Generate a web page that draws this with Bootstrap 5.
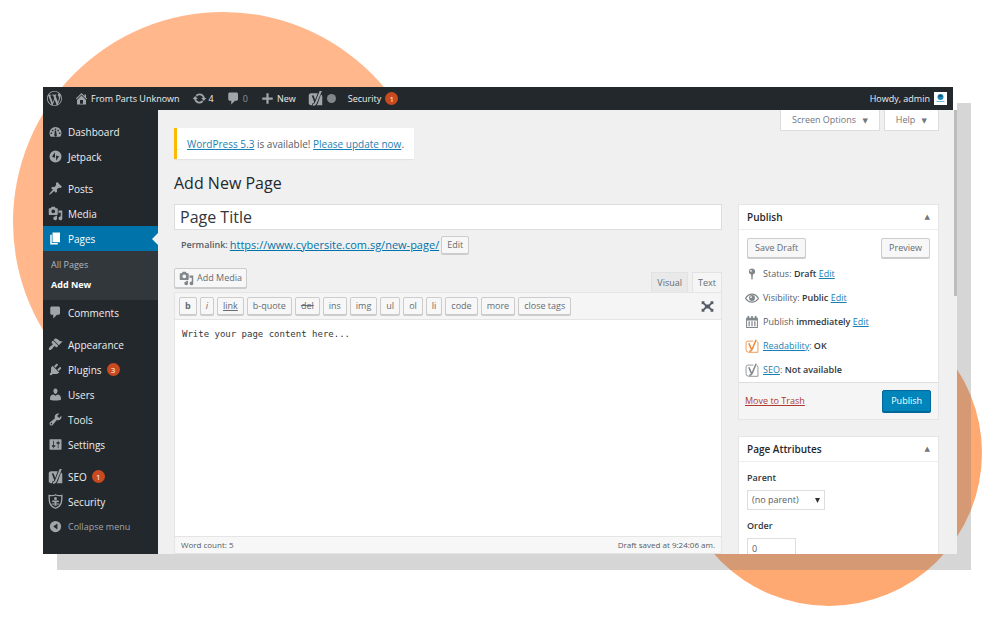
<!DOCTYPE html>
<html lang="en">
<head>
<meta charset="utf-8">
<meta name="viewport" content="width=device-width, initial-scale=1">
<title>Add New Page</title>
<link href="https://cdn.jsdelivr.net/npm/bootstrap@5.3.0/dist/css/bootstrap.min.css" rel="stylesheet">
<style>
body{font:9px/16px "Open Sans","Noto Sans",sans-serif;color:#555d66;background:#fff}
a{color:#1c7fb3}
.stage{min-height:100vh;padding:87px 43px 88px;isolation:isolate;overflow:hidden}
.disc{position:absolute;border-radius:50%;z-index:-1}
.disc-a{width:420px;height:420px;left:13px;top:12px;background:#ffb78b}
.disc-b{width:306px;height:306px;right:18px;bottom:36px;background:#ffa972}
.screen{height:calc(100vh - 175px);box-shadow:14px 16px 0 rgba(120,122,120,.31)}
.ic{width:15px;height:15px;fill:currentColor;flex:none}
.topbar{height:23px;background:#23282d;color:#eee;padding:0 6px 0 4px;margin-right:4px}
.topbar a,.side a{color:#eee;text-decoration:none}
.topbar .ic{color:#a0a5aa}
.topbar .item{gap:2px;margin-right:12px}
.dot{width:9px;height:9px;border-radius:50%;background:#82878c}
.count{min-width:13px;height:13px;line-height:13px;border-radius:50%;background:#ca4a1f;color:#fff;font-size:8px;text-align:center}
.side{width:115px;background:#23282d;padding-top:9px}
.side a{height:25px;padding:0 5px;gap:5px;font-size:10px}
.side .ic{color:#a0a5aa}
.side .gap{margin-top:7px}
.side .now{background:#0073aa;color:#fff;position:relative}
.side .now .ic{color:#fff}
.side .now::after{content:"";position:absolute;right:0;top:7px;border:6px solid transparent;border-right-color:#f0f0f0;border-left:0}
.side .sub{background:#32373c;padding:4px 0 5px}
.side .sub a{height:20px;padding:0 8px;color:#b4b9be;font-size:9px}
.side .sub .cur{color:#fff;font-weight:700}
.side .fold{color:#a0a5aa;font-size:9px}
.work{background:#f0f0f0;padding:0 18px 0 16px;position:relative}
.thumb{position:absolute;right:0;top:0;width:3px;height:186px;background:#bcbdbd}
.screen-tab{height:21px;background:#fff;border:1px solid #ddd;border-top:0;color:#72777c;padding:0 11px;font-size:9px}
.update{margin-top:18px;height:31px;background:#fff;border-left:3px solid #ffb900;padding:0 10px;font-size:10px;box-shadow:0 1px 1px rgba(0,0,0,.05)}
h1{font-size:16px;line-height:24px;font-weight:400;color:#23282d;margin:12px 0 9px}
.title-box{height:26px;border:1px solid #ddd;border-radius:0;padding:0 5px;font-size:16px;line-height:24px;color:#32373c}
.wbtn{background:#f7f7f7;border:1px solid #ccc;border-radius:2px;color:#666c72;box-shadow:0 1px 0 #ccc;font-size:9px;line-height:16px;padding:0 5px}
.wbtn.tall{line-height:18px;padding:0 7px}
.wbtn.add{padding:0 4px;gap:3px}
.wbtn .ic{color:#82878c}
.perma{padding:5px 7px;height:30px;gap:2px}
.perma a{font-size:11px;color:#0073aa}
.perma strong{font-weight:600}
.ed-tab{border:1px solid #e2e2e2;border-bottom:0;background:#e9e9e9;color:#666c72;height:20px;padding:0 5px}
.ed-tab.on{background:#f5f5f5}
.quick{background:#f5f5f5;border:1px solid #e5e5e5;height:28px;padding:0 7px 0 4px;gap:3px}
.expand{color:#555d66}
.expand .ic{width:13px;height:13px}
.write{border:1px solid #e5e5e5;border-top:0;resize:none;padding:6px 7px;font:9px/16px "DejaVu Sans Mono",monospace;color:#32373c;background:#fff;outline:0}
.foot{background:#f7f7f7;border:1px solid #e5e5e5;border-top:0;height:17px;padding:0 6px;font-size:8px}
.rail{width:201px;padding-top:94px}
.panel{background:#fff;border:1px solid #e5e5e5}
.panel h2{margin:0;height:25px;padding:0 8px;font-size:10px;font-weight:600;line-height:16px;color:#23282d;border-bottom:1px solid #eee}
.tri{font:7px/16px "DejaVu Sans",sans-serif;color:#72777c}
.facts{padding:4px 6px 0}
.facts li{height:24px;gap:4px}
.facts .ic{width:14px;height:14px;color:#82878c}
.facts .warm{color:#ee8a3c}
.facts b,.panel label{font-weight:600;color:#32373c}
.major{background:#f5f5f5;border-top:1px solid #ddd;padding:0 7px 0 6px;height:37px}
.trash{color:#b03a30}
.go{background:#0085ba;border:1px solid #006799;border-radius:2px;color:#fff;line-height:20px;padding:0 8px;box-shadow:0 1px 0 #006799}
.attrs{padding:8px}
.attrs select,.attrs input{border:1px solid #ddd;border-radius:0;font-size:9px;line-height:16px;height:20px;padding:0 4px;color:#555d66;box-shadow:none}
.attrs select{width:78px;background-position:right 4px center;background-size:5px;--bs-form-select-bg-img:url("data:image/svg+xml,%3Csvg xmlns='http://www.w3.org/2000/svg' viewBox='0 0 6 6'%3E%3Cpath d='M0 0h6L3 6z' fill='%23333'/%3E%3C/svg%3E")}
.attrs input{width:49px}
</style>
</head>
<body>
<svg class="d-none" xmlns="http://www.w3.org/2000/svg">
<symbol id="wp" viewBox="0 0 20 20"><path d="M20 10c0-5.51-4.49-10-10-10C4.48 0 0 4.49 0 10c0 5.52 4.48 10 10 10 5.51 0 10-4.48 10-10zM7.78 15.37L4.37 6.22c.55-.02 1.17-.08 1.17-.08.5-.06.44-1.13-.06-1.11 0 0-1.45.11-2.37.11-.18 0-.37 0-.58-.01C4.12 2.69 6.87 1.11 10 1.11c2.33 0 4.45.87 6.05 2.34-.68-.11-1.65.39-1.65 1.58 0 .74.45 1.36.9 2.1.35.61.55 1.36.55 2.46 0 1.49-1.4 5-1.4 5l-3.03-8.37c.54-.02.82-.17.82-.17.5-.05.44-1.25-.06-1.22 0 0-1.44.12-2.38.12-.87 0-2.33-.12-2.33-.12-.5-.03-.56 1.2-.06 1.22l.92.08 1.26 3.41zM17.41 10c.24-.64.74-1.87.43-4.25.7 1.29 1.05 2.71 1.05 4.25 0 3.29-1.73 6.24-4.4 7.78.97-2.59 1.94-5.2 2.92-7.78zM6.1 18.09C3.12 16.65 1.11 13.53 1.11 10c0-1.3.23-2.48.72-3.59C3.25 10.3 4.67 14.2 6.1 18.09zm4.03-6.63l2.58 6.98c-.86.29-1.76.45-2.71.45-.79 0-1.57-.11-2.29-.33.81-2.38 1.62-4.74 2.42-7.1z"/></symbol>
<symbol id="home" viewBox="0 0 20 20"><path fill-rule="evenodd" d="M16 8.5l1.53 1.53-1.06 1.06L10 4.6l-6.47 6.49-1.06-1.06L10 2.5l4 4v-2h2v4zm-6-2.46l6 5.99V18H4v-5.97zM12 17v-5H8v5h4z"/></symbol>
<symbol id="update" viewBox="0 0 20 20"><path d="M10.2 3.28c3.53 0 6.43 2.61 6.92 6h2.08l-3.5 4-3.5-4h2.32c-.45-1.97-2.21-3.45-4.32-3.45-1.45 0-2.73.71-3.54 1.78L4.95 5.66C6.23 4.2 8.11 3.28 10.2 3.28zm-.4 13.44c-3.52 0-6.43-2.61-6.92-6H.8l3.5-4 3.5 4H5.48c.45 1.97 2.21 3.45 4.32 3.45 1.45 0 2.73-.71 3.54-1.78l1.71 1.95c-1.28 1.46-3.15 2.38-5.25 2.38z"/></symbol>
<symbol id="talk" viewBox="0 0 20 20"><path d="M5 2h9c1.1 0 2 .9 2 2v7c0 1.1-.9 2-2 2h-2l-5 5v-5H5c-1.1 0-2-.9-2-2V4c0-1.1.9-2 2-2z"/></symbol>
<symbol id="plus" viewBox="0 0 20 20"><path d="M17 8.500v3h-5.500V17h-3v-5.500H3v-3h5.500V3h3v5.500z"/></symbol>
<symbol id="yoast" viewBox="0 0 20 20"><path fill-rule="evenodd" d="M4 3h9l-3.500 9L7.500 6H5l3.300 8.500c-.5 1.500-1.300 2-2.800 2V19H4c-1.700 0-3-1.300-3-3V6c0-1.700 1.300-3 3-3zM15.500 0H18.500L11.500 16.500c-1 2.300-2.500 3.200-5 3.300v-2.300c1.600-.2 2.400-1 3-2.500zM17.300 4.500C18.500 5 19 6 19 7v12h-7.700c.8-.7 1.300-1.500 1.700-2.500z"/></symbol>
<symbol id="yline" viewBox="0 0 20 20"><path fill="none" stroke="currentColor" stroke-width="1.200" d="M12 3H4Q1.500 3 1.500 6v9q0 4 4 4h13V6q0-2-1.500-2.500"/><path fill="none" stroke="currentColor" stroke-width="2.200" d="M5.500 6l3.500 8.500M16 1L10 15q-1 2.500-4 2.500"/></symbol>
<symbol id="dash" viewBox="0 0 20 20"><path fill-rule="evenodd" d="M3.760 17h12.480A8 8 0 0 0 18 12a8 8 0 0 0-16 0c0 1.890.66 3.630 1.760 5zM9 6h2v2H9zM5.200 7.500h2v2h-2zM12.500 7.500h2v2h-2zM3.500 11.300h2v2h-2zM14.500 11.300h2v2h-2zM9 8.800h1.700l.8 5a1.800 1.800 0 1 1-3 .3z"/></symbol>
<symbol id="jet" viewBox="0 0 20 20"><path fill-rule="evenodd" d="M10 2a8 8 0 1 0 0 16 8 8 0 0 0 0-16zM9.300 4.300v7.200l-4-1.200zM10.800 15.700V8.500l3.900 1.200z"/></symbol>
<symbol id="pin" viewBox="0 0 20 20"><path d="M10.440 3.020l1.820-1.820 6.360 6.350-1.830 1.820c-1.050-.68-2.480-.57-3.410.36l-.75.75c-.92.93-1.040 2.350-.35 3.410l-1.830 1.820-2.410-2.410-2.800 2.790c-.42.42-3.380 2.710-3.800 2.290s1.860-3.390 2.280-3.810l2.790-2.790L4.100 9.360l1.830-1.820c1.050.69 2.480.57 3.400-.36l.75-.75c.93-.92 1.050-2.350.36-3.410z"/></symbol>
<symbol id="media" viewBox="0 0 20 20"><path fill-rule="evenodd" d="M13 11V4c0-.55-.45-1-1-1h-1.670L9 1H5L3.670 3H2c-.55 0-1 .45-1 1v7c0 .55.45 1 1 1h10c.55 0 1-.45 1-1zM7 4.500a2.500 2.500 0 1 1 0 5 2.500 2.500 0 0 1 0-5zM14 6h5v10.500a2.500 2.500 0 1 1-2-2.450V9h-3V6zm-4 8.050V13h2v3.500a2.500 2.500 0 1 1-2-2.450z"/></symbol>
<symbol id="page" viewBox="0 0 20 20"><path d="M6 15V2h10v13H6zm-1 1h8v2H3V5h2v11z"/></symbol>
<symbol id="brush" viewBox="0 0 20 20"><path d="M14.480 11.060L7.410 3.990l1.500-1.500c.5-.56 2.300-.47 3.510.32 1.210.8 1.430 1.280 2.910 2.100 1.180.64 2.450 1.260 4.450.85zm-.71.71L6.700 4.700 4.930 6.470c-.39.39-.39 1.020 0 1.410l1.060 1.060c.39.39.39 1.030 0 1.420-.6.6-1.430 1.110-2.210 1.690-.35.26-.7.53-1.010.84C1.430 14.230.4 16.080 1.400 17.070c.99 1 2.840-.03 4.180-1.360.31-.31.58-.66.85-1.020.57-.78 1.080-1.610 1.690-2.210.39-.39 1.020-.39 1.410 0l1.060 1.060c.39.39 1.020.39 1.410 0z"/></symbol>
<symbol id="plug" viewBox="0 0 20 20"><path d="M13.110 4.360L9.870 7.600 8 5.730l3.240-3.240c.35-.34 1.050-.2 1.560.32.52.51.66 1.210.31 1.550zm-8 1.770l.91-1.120 9.010 9.010-1.190.84c-.71.71-2.630 1.160-3.820 1.160H6.140L4.900 17.260c-.59.59-1.540.59-2.120 0-.59-.58-.59-1.530 0-2.120l1.240-1.240v-3.880c0-1.130.4-3.190 1.090-3.890zm7.260 3.970l3.240-3.240c.34-.35 1.040-.21 1.550.31.52.51.66 1.210.31 1.550l-3.240 3.250z"/></symbol>
<symbol id="user" viewBox="0 0 20 20"><path d="M10 9.250c-2.270 0-2.730-3.440-2.730-3.440C7 4.020 7.820 2 9.970 2c2.160 0 2.980 2.020 2.710 3.810 0 0-.41 3.440-2.680 3.440zm0 2.570L12.720 10c2.390 0 4.520 2.330 4.520 4.530v2.490s-3.650 1.130-7.240 1.130c-3.650 0-7.240-1.130-7.240-1.130v-2.490c0-2.250 1.940-4.480 4.470-4.480z"/></symbol>
<symbol id="tool" viewBox="0 0 20 20"><path fill-rule="evenodd" d="M16.680 9.770c-1.340 1.340-3.300 1.670-4.950.99l-5.410 6.520c-.99.99-2.590.99-3.580 0s-.99-2.590 0-3.570l6.520-5.420c-.68-1.650-.35-3.610.99-4.950 1.280-1.280 3.120-1.620 4.720-1.060l-2.890 2.890 2.820 2.820 2.860-2.870c.53 1.580.18 3.390-1.080 4.650zM3.810 16.210c.4.39 1.040.39 1.430 0 .4-.4.4-1.040 0-1.430-.39-.4-1.030-.4-1.430 0-.39.39-.39 1.030 0 1.430z"/></symbol>
<symbol id="gear" viewBox="0 0 20 20"><path fill-rule="evenodd" d="M18 16V4c0-.55-.45-1-1-1H3c-.55 0-1 .45-1 1v12c0 .55.45 1 1 1h14c.55 0 1-.45 1-1zM8 11h1c.55 0 1 .45 1 1s-.45 1-1 1H8v1.500c0 .28-.22.5-.5.5s-.5-.22-.5-.5V13H6c-.55 0-1-.45-1-1s.45-1 1-1h1V5.500c0-.28.22-.5.5-.5s.5.22.5.5V11zm5-2h-1c-.55 0-1-.45-1-1s.45-1 1-1h1V5.500c0-.28.22-.5.5-.5s.5.22.5.5V7h1c.55 0 1 .45 1 1s-.45 1-1 1h-1v5.500c0 .28-.22.5-.5.5s-.5-.22-.5-.5V9z"/></symbol>
<symbol id="shield" viewBox="0 0 20 20"><path fill="none" stroke="currentColor" stroke-width="1.800" d="M10 1C7.500 2.500 5 2.500 1.500 2c0 8 0 13.500 8.500 17 8.500-3.500 8.500-9 8.500-17C15 2.500 12.500 2.500 10 1z"/><circle cx="10" cy="6" r="2"/><path d="M5.500 8.500h9v2h-3v5h-3v-5h-3zM6 12h1.500v2.500H6zM12.500 12H14v2.500h-1.500z"/></symbol>
<symbol id="fold" viewBox="0 0 20 20"><path fill-rule="evenodd" d="M10 2.500a7.500 7.500 0 1 0 0 15 7.500 7.500 0 0 0 0-15zM12.500 6v8L7 10z"/></symbol>
<symbol id="post" viewBox="0 0 20 20"><path fill-rule="evenodd" d="M10 2a4.500 4.500 0 0 1 1.300 8.800L10.800 18H9.200l-.5-7.200A4.500 4.500 0 0 1 10 2zM8.500 4.200a1.300 1.300 0 1 0 0 2.600 1.300 1.300 0 0 0 0-2.600z"/></symbol>
<symbol id="eye" viewBox="0 0 20 20"><path fill="none" stroke="currentColor" stroke-width="1.800" d="M.8 10.500Q4.500 4.500 10 4.500t9.200 6Q15.500 16 10 16T.8 10.500z"/><circle cx="10" cy="10" r="4.200"/><circle cx="8.700" cy="8.700" r="1.300" fill="#fff"/></symbol>
<symbol id="cal" viewBox="0 0 20 20"><path fill-rule="evenodd" d="M1.500 4h2V1.500H6V4h2.800V1.500h2.400V4H14V1.500h2.500V4h2v14.500h-17zM3 8v9h14V8zM5 9h1.800v7H5zM9.100 9h1.800v7H9.100zM13.200 9H15v7h-1.800z"/></symbol>
<symbol id="full" viewBox="0 0 20 20"><path d="M1 2h4.500L5 4l3 3h4l3-3-.5-2H19v4.500L17 6l-3 3v2l3 3 2-.5V18h-4.500l.5-2-3-3H8l-3 3 .5 2H1v-4.500l2 .5 3-3V9L3 6l-2 .5z"/></symbol>
</svg>

<div class="stage position-relative">
  <div class="disc disc-a"></div>
  <div class="disc disc-b"></div>
  <div class="screen d-flex flex-column">
    <header class="topbar d-flex align-items-center flex-shrink-0">
      <a href="#" class="item d-flex" aria-label="About WordPress"><svg class="ic"><use href="#wp"/></svg></a>
      <a href="#" class="item d-flex align-items-center"><svg class="ic"><use href="#home"/></svg>From Parts Unknown</a>
      <a href="#" class="item d-flex align-items-center"><svg class="ic"><use href="#update"/></svg>4</a>
      <a href="#" class="item d-flex align-items-center"><svg class="ic"><use href="#talk"/></svg><span class="opacity-50">0</span></a>
      <a href="#" class="item d-flex align-items-center"><svg class="ic"><use href="#plus"/></svg>New</a>
      <a href="#" class="item d-flex align-items-center gap-1" aria-label="Yoast SEO"><svg class="ic"><use href="#yoast"/></svg><span class="dot"></span></a>
      <a href="#" class="item d-flex align-items-center gap-1">Security<span class="count">1</span></a>
      <a href="#" class="d-flex align-items-center gap-1 ms-auto">Howdy, admin
        <svg width="13" height="13" viewBox="0 0 13 13"><path fill="#fff" d="M0 0h13v13H0z"/><circle cx="6.500" cy="5" r="3" fill="#1d87b8"/><path d="M4 4.500q2-3 5 0z" fill="#17384f"/><path d="M2.500 9.500h8" stroke="#6fb4d4"/></svg></a>
    </header>
    <div class="d-flex flex-fill overflow-hidden">
      <nav class="side flex-shrink-0">
        <a href="#" class="d-flex align-items-center"><svg class="ic"><use href="#dash"/></svg>Dashboard</a>
        <a href="#" class="d-flex align-items-center"><svg class="ic"><use href="#jet"/></svg>Jetpack</a>
        <a href="#" class="d-flex align-items-center gap"><svg class="ic"><use href="#pin"/></svg>Posts</a>
        <a href="#" class="d-flex align-items-center"><svg class="ic"><use href="#media"/></svg>Media</a>
        <a href="#" class="d-flex align-items-center now"><svg class="ic"><use href="#page"/></svg>Pages</a>
        <div class="sub">
          <a href="#" class="d-flex align-items-center">All Pages</a>
          <a href="#" class="d-flex align-items-center cur">Add New</a>
        </div>
        <a href="#" class="d-flex align-items-center"><svg class="ic"><use href="#talk"/></svg>Comments</a>
        <a href="#" class="d-flex align-items-center gap"><svg class="ic"><use href="#brush"/></svg>Appearance</a>
        <a href="#" class="d-flex align-items-center"><svg class="ic"><use href="#plug"/></svg>Plugins<span class="count">3</span></a>
        <a href="#" class="d-flex align-items-center"><svg class="ic"><use href="#user"/></svg>Users</a>
        <a href="#" class="d-flex align-items-center"><svg class="ic"><use href="#tool"/></svg>Tools</a>
        <a href="#" class="d-flex align-items-center"><svg class="ic"><use href="#gear"/></svg>Settings</a>
        <a href="#" class="d-flex align-items-center gap"><svg class="ic"><use href="#yoast"/></svg>SEO<span class="count">1</span></a>
        <a href="#" class="d-flex align-items-center"><svg class="ic"><use href="#shield"/></svg>Security</a>
        <a href="#" class="d-flex align-items-center fold"><svg class="ic"><use href="#fold"/></svg>Collapse menu</a>
      </nav>
      <main class="work d-flex flex-fill gap-3">
        <div class="thumb"></div>
        <section class="d-flex flex-column flex-fill">
          <div class="update d-flex align-items-center align-self-start"><span><a href="#">WordPress 5.3</a> is available! <a href="#">Please update now</a>.</span></div>
          <h1>Add New Page</h1>
          <input class="title-box form-control flex-shrink-0" type="text" value="Page Title" aria-label="Page title">
          <div class="perma d-flex align-items-center">
            <strong>Permalink:</strong><a href="#">https://www.cybersite.com.sg/new-page/</a>
            <button type="button" class="wbtn">Edit</button>
          </div>
          <div class="d-flex align-items-end justify-content-between pt-2">
            <button type="button" class="wbtn tall add d-flex align-items-center mb-1"><svg class="ic"><use href="#media"/></svg>Add Media</button>
            <div class="d-flex gap-1">
              <button type="button" class="ed-tab">Visual</button>
              <button type="button" class="ed-tab on">Text</button>
            </div>
          </div>
          <div class="quick d-flex align-items-center flex-shrink-0">
            <button type="button" class="wbtn fw-bold">b</button>
            <button type="button" class="wbtn fst-italic">i</button>
            <button type="button" class="wbtn text-decoration-underline">link</button>
            <button type="button" class="wbtn">b-quote</button>
            <button type="button" class="wbtn text-decoration-line-through">del</button>
            <button type="button" class="wbtn">ins</button>
            <button type="button" class="wbtn">img</button>
            <button type="button" class="wbtn">ul</button>
            <button type="button" class="wbtn">ol</button>
            <button type="button" class="wbtn">li</button>
            <button type="button" class="wbtn">code</button>
            <button type="button" class="wbtn">more</button>
            <button type="button" class="wbtn">close tags</button>
            <button type="button" class="btn expand p-0 border-0 d-flex ms-auto" aria-label="Full screen"><svg class="ic"><use href="#full"/></svg></button>
          </div>
          <textarea class="write flex-fill" aria-label="Page content">Write your page content here...</textarea>
          <div class="foot d-flex align-items-center justify-content-between flex-shrink-0"><span>Word count: 5</span><span>Draft saved at 9:24:06 am.</span></div>
        </section>
        <aside class="rail flex-shrink-0 position-relative">
          <div class="position-absolute top-0 end-0 d-flex gap-1">
            <button type="button" class="screen-tab text-nowrap">Screen Options <span class="tri ms-1">▼</span></button>
            <button type="button" class="screen-tab text-nowrap">Help <span class="tri ms-1">▼</span></button>
          </div>
          <div class="panel mb-3">
            <h2 class="d-flex align-items-center justify-content-between">Publish<span class="tri">▲</span></h2>
            <div class="d-flex justify-content-between px-2 pt-2">
              <button type="button" class="wbtn tall">Save Draft</button>
              <button type="button" class="wbtn tall">Preview</button>
            </div>
            <ul class="facts list-unstyled m-0">
              <li class="d-flex align-items-center"><svg class="ic"><use href="#post"/></svg><span>Status: <b>Draft</b> <a href="#">Edit</a></span></li>
              <li class="d-flex align-items-center"><svg class="ic"><use href="#eye"/></svg><span>Visibility: <b>Public</b> <a href="#">Edit</a></span></li>
              <li class="d-flex align-items-center"><svg class="ic"><use href="#cal"/></svg><span>Publish <b>immediately</b> <a href="#">Edit</a></span></li>
              <li class="d-flex align-items-center"><svg class="ic warm"><use href="#yline"/></svg><span><a href="#">Readability</a>: <b>OK</b></span></li>
              <li class="d-flex align-items-center"><svg class="ic"><use href="#yline"/></svg><span><a href="#">SEO</a>: <b>Not available</b></span></li>
            </ul>
            <div class="major d-flex align-items-center justify-content-between">
              <a href="#" class="trash">Move to Trash</a>
              <button type="button" class="go">Publish</button>
            </div>
          </div>
          <div class="panel">
            <h2 class="d-flex align-items-center justify-content-between">Page Attributes<span class="tri">▲</span></h2>
            <div class="attrs">
              <label class="d-block mb-1" for="parent">Parent</label>
              <select class="form-select mb-2" id="parent"><option>(no parent)</option></select>
              <label class="d-block mb-1" for="order">Order</label>
              <input class="form-control" id="order" type="text" value="0">
            </div>
          </div>
        </aside>
      </main>
    </div>
  </div>
</div>
<script src="https://cdn.jsdelivr.net/npm/bootstrap@5.3.0/dist/js/bootstrap.bundle.min.js"></script>
</body>
</html>
